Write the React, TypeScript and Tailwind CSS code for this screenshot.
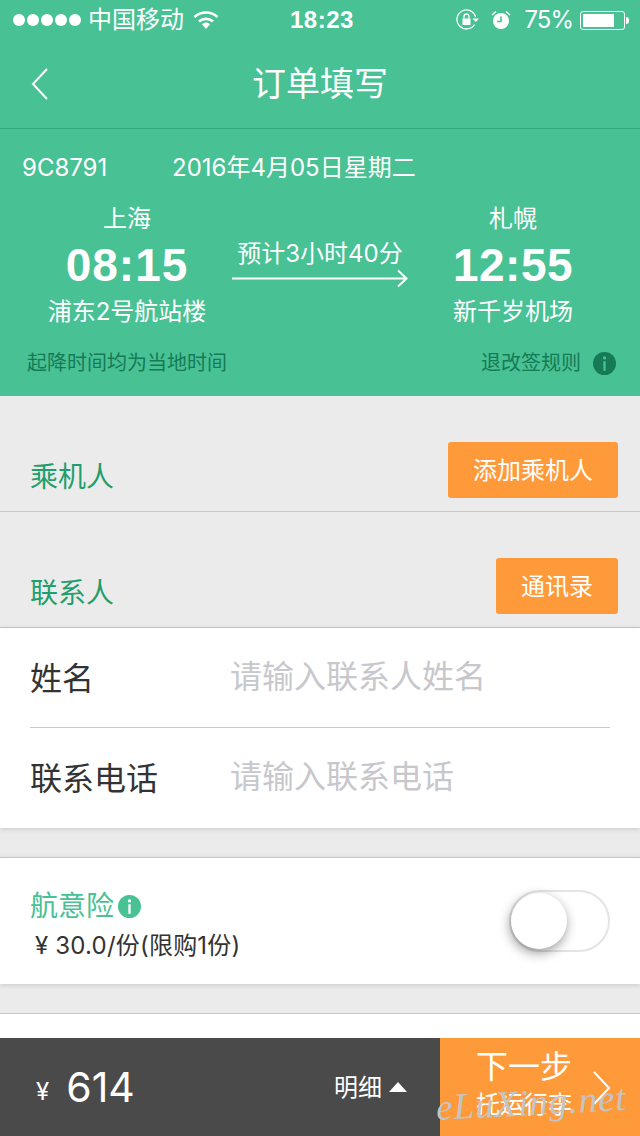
import { Fragment } from 'react'

const font = "font-['Inter','Noto_Sans_CJK_SC',sans-serif]"
const boldFont = "font-['Liberation_Sans','Noto_Sans_CJK_SC',sans-serif]"

function InfoIcon({ bg, fg, size }: { bg: string; fg: string; size: number }) {
  return (
    <svg width={size} height={size} viewBox="0 0 24 24" className="shrink-0">
      <circle cx="12" cy="12" r="12" fill={bg} />
      <circle cx="12" cy="6.2" r="1.7" fill={fg} />
      <rect x="10.8" y="9.6" width="2.4" height="10" fill={fg} />
    </svg>
  )
}

function StatusBar() {
  return (
    <div className="relative flex h-10 items-center justify-between pl-[13px] pr-[11px] text-white">
      <div className="flex items-center">
        <div className="flex gap-[2px]">
          {[0, 1, 2, 3, 4].map(i => (
            <span key={i} className="h-3 w-3 rounded-full bg-white" />
          ))}
        </div>
        <span className="ml-[7px] text-[24px] leading-none">中国移动</span>
        <svg width="26" height="20" viewBox="0 0 26 20" className="ml-[9px]">
          <path d="M1.5 7 C8 1 18 1 24.5 7" fill="none" stroke="white" strokeWidth="2.6" />
          <path d="M6 11.5 C10 8 16 8 20 11.5" fill="none" stroke="white" strokeWidth="2.6" />
          <path d="M9 14.2 C11.5 12 14.5 12 17 14.2 L13 19 Z" fill="white" />
        </svg>
      </div>
      <span className={`absolute left-[290px] text-[24px] font-bold leading-none tracking-[0.5px] ${boldFont}`}>18:23</span>
      <div className="flex items-center">
        <svg width="24" height="22" viewBox="0 0 24 22">
          <path d="M18.5 15.5 A9.5 9.5 0 1 1 19.6 8" fill="none" stroke="white" strokeWidth="1.3" />
          <path d="M16.5 9.5 H23 L19.8 13 Z" fill="white" />
          <rect x="6.5" y="9.5" width="8" height="6.5" fill="white" />
          <path d="M8 9.5 V7.5 A2.5 2.5 0 0 1 13 7.5 V9.5" fill="none" stroke="white" strokeWidth="1.3" />
        </svg>
        <svg width="20" height="20" viewBox="0 0 20 20" className="ml-[11px]">
          <circle cx="10" cy="11" r="8" fill="white" />
          <path d="M10 6.5 V11.5 H6" fill="none" stroke="#48c194" strokeWidth="1.6" />
          <path d="M1 5 L5 1.5 M19 5 L15 1.5" stroke="white" strokeWidth="1.6" />
        </svg>
        <span className="ml-[13px] text-[24px] leading-none tracking-[-1px]">75%</span>
        <div className="ml-[7px] flex items-center">
          <div className="h-[19px] w-[45px] rounded-[3px] border border-white p-[2px]">
            <div className="h-full w-[31px] bg-white" />
          </div>
          <div className="ml-[1px] h-[7px] w-[3px] rounded-r-full bg-white" />
        </div>
      </div>
    </div>
  )
}

function NavBar() {
  return (
    <div className="relative flex h-[89px] items-center justify-center border-b border-[#2fab7c]">
      <svg width="18" height="34" viewBox="0 0 18 34" className="absolute left-[31px] top-[27px]">
        <path d="M16 2 L2 17 L16 32" fill="none" stroke="white" strokeWidth="2" />
      </svg>
      <span className="text-[34px] leading-none text-white">订单填写</span>
    </div>
  )
}

function Flight() {
  return (
    <div className="h-[267px] text-white">
      <div className="flex pl-[22px] pt-[25px] text-[24px] leading-[28px]">
        <span className="w-[150px]">9C8791</span>
        <span>2016年4月05日星期二</span>
      </div>
      <div className="mt-[22px] flex">
        <div className="ml-[27px] flex w-[200px] flex-col items-center">
          <span className="text-[24px] leading-[30px]">上海</span>
          <span className={`text-[46px] font-bold leading-[62px] tracking-[1px] ${boldFont}`}>08:15</span>
          <span className="mt-px text-[24px] leading-[30px]">浦东2号航站楼</span>
        </div>
        <div className="ml-[5px] flex w-[176px] flex-col items-center pt-[35px]">
          <span className="text-[24px] leading-[30px]">预计3小时40分</span>
          <svg width="176" height="20" viewBox="0 0 176 20">
            <path d="M0 9.5 H174 M166 1.5 L174.5 9.5 L166 17.5" fill="none" stroke="white" strokeWidth="2" />
          </svg>
        </div>
        <div className="ml-[5px] flex w-[200px] flex-col items-center">
          <span className="text-[24px] leading-[30px]">札幌</span>
          <span className={`text-[46px] font-bold leading-[62px] tracking-[0.5px] ${boldFont}`}>12:55</span>
          <span className="mt-px text-[24px] leading-[30px]">新千岁机场</span>
        </div>
      </div>
      <div className="mt-[23px] flex items-center justify-between pl-[27px] pr-[24px] text-[20px] leading-[26px] text-[#157a56]">
        <span>起降时间均为当地时间</span>
        <div className="flex items-center gap-[12px]">
          <span className="ml-px">退改签规则</span>
          <InfoIcon bg="#157a56" fg="#48c194" size={23} />
        </div>
      </div>
    </div>
  )
}

function SectionHead({ label, action }: { label: string; action: string }) {
  return (
    <div className="flex h-[116px] items-end justify-between border-b border-[#c8c8c8] pl-[30px] pr-[22px]">
      <span className="pb-[18px] text-[28px] leading-[32px] text-[#1f9e6e]">{label}</span>
      <span className="mb-[13px] flex h-[56px] items-center justify-center rounded-[3px] bg-[#ff9a3b] px-[25px] pt-px text-[24px] text-white">
        {action}
      </span>
    </div>
  )
}

function Contact() {
  const rows = [
    { label: '姓名', hint: '请输入联系人姓名' },
    { label: '联系电话', hint: '请输入联系电话' },
  ]
  return (
    <div className="bg-white shadow-[0_1px_5px_rgba(0,0,0,0.15)]">
      {rows.map((row, i) => (
        <Fragment key={row.label}>
          {i > 0 && <div className="mx-[30px] h-px bg-[#c8c8c8]" />}
          <div className={`flex items-center pl-[30px] ${i === 0 ? 'h-[99px]' : 'h-[100px]'}`}>
            <span className="mt-[2px] w-[201px] text-[32px] leading-none text-[#333333]">{row.label}</span>
            <span className="-ml-px -mt-[2px] text-[32px] leading-none text-[#c7c7cc]">{row.hint}</span>
          </div>
        </Fragment>
      ))}
    </div>
  )
}

function Insurance() {
  return (
    <div className="mt-[29px] flex h-[127px] items-center justify-between border-t border-[#c8c8c8] bg-white pl-[30px] pr-[30px] shadow-[0_1px_5px_rgba(0,0,0,0.15)]">
      <div className="flex flex-col pt-[8px]">
        <div className="flex items-center gap-[4px]">
          <span className="text-[28px] leading-[34px] text-[#48c194]">航意险</span>
          <InfoIcon bg="#48c194" fg="white" size={23} />
        </div>
        <span className="mt-[8px] pl-[5px] text-[24px] leading-[30px] tracking-[0.2px] text-[#333333]">¥ 30.0/份(限购1份)</span>
      </div>
      <div className="relative h-[62px] w-[101px] rounded-full border-2 border-[#e4e4e4] bg-white">
        <div className="absolute left-0 top-px h-[56px] w-[56px] rounded-full bg-white shadow-[-1px_4px_12px_rgba(0,0,0,0.4)]" />
      </div>
    </div>
  )
}

function BottomBar() {
  return (
    <div className="absolute bottom-0 left-0 flex h-[98px] w-[640px] text-white">
      <div className="flex flex-1 items-center bg-[#4a4a4a] pl-[36px]">
        <span className="mt-[10px] text-[24px] leading-none">¥</span>
        <span className="ml-[17px] text-[41px] leading-none">614</span>
        <span className="ml-auto mt-[2px] text-[24px] leading-none">明细</span>
        <svg width="18" height="10" viewBox="0 0 18 10" className="ml-[7px] mr-[33px]">
          <path d="M9 0 L18 10 H0 Z" fill="white" />
        </svg>
      </div>
      <div className="relative flex w-[200px] flex-col items-center bg-[#ff9a3b] pr-[32px] pt-[10px]">
        <span className="text-[32px] leading-[38px]">下一步</span>
        <span className="mt-[4px] text-[24px] leading-[30px]">托运行李</span>
        <svg width="20" height="36" viewBox="0 0 20 36" className="absolute left-[152px] top-[32px]">
          <path d="M2 2 L17 18 L2 34" fill="none" stroke="white" strokeWidth="2" />
        </svg>
      </div>
      <span className="absolute left-[436px] top-[46px] -rotate-3 font-['Liberation_Serif',serif] text-[37px] italic leading-none tracking-[1px] text-[#c4c4c4]">
        eLuXing.net
      </span>
    </div>
  )
}

export default function App() {
  return (
    <div className={`relative h-[1136px] w-[640px] overflow-hidden bg-[#ebebeb] ${font}`}>
      <div className="bg-[#48c194]">
        <StatusBar />
        <NavBar />
        <Flight />
      </div>
      <SectionHead label="乘机人" action="添加乘机人" />
      <SectionHead label="联系人" action="通讯录" />
      <Contact />
      <Insurance />
      <div className="mt-[29px] h-[30px] border-t border-[#c8c8c8] bg-white" />
      <BottomBar />
    </div>
  )
}
